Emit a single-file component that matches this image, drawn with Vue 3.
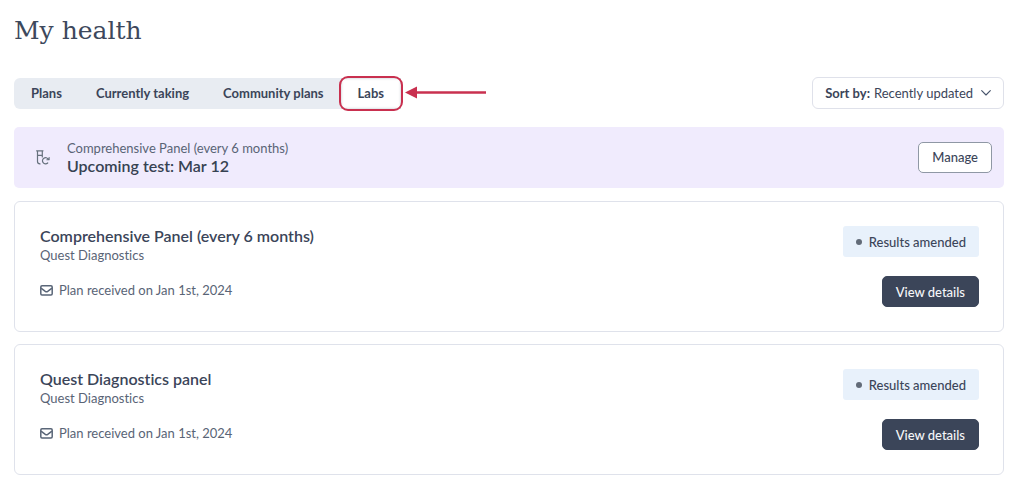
<script setup>
import { ref } from 'vue'

const tabs = ['Plans', 'Currently taking', 'Community plans', 'Labs']
const active = ref('Labs')
const sort = ref('Recently updated')
const panels = [
  { title: 'Comprehensive Panel (every 6 months)', lab: 'Quest Diagnostics', note: 'Plan received on Jan 1st, 2024', status: 'Results amended' },
  { title: 'Quest Diagnostics panel', lab: 'Quest Diagnostics', note: 'Plan received on Jan 1st, 2024', status: 'Results amended' },
]
</script>

<template>
  <main class="page">
    <h1>My health</h1>

    <div class="toolbar">
      <nav class="tabs" aria-label="Health sections">
        <button
          v-for="tab in tabs"
          :key="tab"
          type="button"
          class="tab"
          :class="{ active: tab === active }"
          @click="active = tab"
        >{{ tab }}</button>
      </nav>
      <svg class="arrow" width="82" height="14" viewBox="0 0 82 14" aria-hidden="true">
        <path d="M11 6.5H81" stroke="#c9304f" stroke-width="2.4" fill="none" />
        <path d="M0 6.5L12 0.5V12.5Z" fill="#c9304f" />
      </svg>
      <div class="sort">
        <label for="sort">Sort by:</label>
        <select id="sort" v-model="sort">
          <option>Recently updated</option>
        </select>
        <svg class="chevron" width="10" height="6" viewBox="0 0 10 6" aria-hidden="true">
          <path d="M0.7 0.7L5 5L9.3 0.7" fill="none" stroke="#46536a" stroke-width="1.1" stroke-linecap="round" stroke-linejoin="round" />
        </svg>
      </div>
    </div>

    <section class="banner">
      <svg class="tube" width="14" height="15" viewBox="0 0 14 15" fill="none" stroke="#66717d" stroke-width="1.2" stroke-linecap="round" aria-hidden="true">
        <path d="M0.6 0.8H7M1.5 0.8V11.4Q1.5 13.7 4 13.9M6.3 0.8V7M1.5 5.4H6.3" />
        <path d="M12.3 9.3A3.1 3.1 0 1 0 11.7 13" />
        <path d="M13.4 7.4V10H10.8Z" fill="#66717d" stroke-width="0.5" />
      </svg>
      <div class="banner-text">
        <p class="banner-name">Comprehensive Panel (every 6 months)</p>
        <p class="banner-test">Upcoming test: Mar 12</p>
      </div>
      <button type="button" class="btn outline">Manage</button>
    </section>

    <article v-for="panel in panels" :key="panel.title" class="card">
      <div class="info">
        <h2>{{ panel.title }}</h2>
        <p class="lab">{{ panel.lab }}</p>
        <p class="note">
          <svg width="13" height="11" viewBox="0 0 13 11" fill="none" stroke="#5a6678" stroke-width="1.5" stroke-linejoin="round" aria-hidden="true">
            <rect x="0.8" y="0.8" width="11.4" height="9.2" rx="1.2" />
            <path d="M1 3.2L5.3 6.4Q6.5 7.2 7.7 6.4L12 3.2" />
          </svg>
          <span>{{ panel.note }}</span>
        </p>
      </div>
      <div class="actions">
        <span class="status"><i class="dot"></i>{{ panel.status }}</span>
        <button type="button" class="btn solid">View details</button>
      </div>
    </article>
  </main>
</template>

<style>
body {
  margin: 0;
  background: #fff;
}
</style>

<style scoped>
.page {
  padding: 13px 20px 16px 14px;
  font-family: Lato, "Open Sans", sans-serif;
  font-size: 13px;
  font-variant-ligatures: none;
  line-height: 18px;
  color: #3b4559;
}
h1, h2, p {
  margin: 0;
}
h1 {
  font-family: "DejaVu Serif", serif;
  font-size: 25px;
  font-weight: 400;
  line-height: 36px;
  color: #3d485c;
}
button, select {
  font: inherit;
  font-variant-ligatures: none;
  color: inherit;
  margin: 0;
}
.toolbar {
  display: flex;
  align-items: center;
  margin-top: 28px;
  margin-bottom: 18px;
}
.tabs {
  display: flex;
  background: #e8ecf2;
  border-radius: 6px;
}
.tab {
  position: relative;
  border: 0;
  background: none;
  height: 31px;
  padding: 0 17px;
  font-weight: 700;
  white-space: nowrap;
}
.tab.active {
  background: #fff;
  box-shadow: inset 0 0 3px #b9c0cc;
}
.tab.active::after {
  content: "";
  position: absolute;
  inset: -2px;
  border: 2px solid #c9304f;
  border-radius: 9px;
}
.arrow {
  margin-left: 4px;
}
.sort {
  display: flex;
  align-items: center;
  box-sizing: border-box;
  height: 32px;
  margin-left: auto;
  padding: 0 12px;
  border: 1px solid #dfe1ea;
  border-radius: 6px;
}
.sort label {
  font-weight: 700;
}
.sort select {
  appearance: none;
  border: 0;
  padding: 0 17px 0 4px;
  background: none;
}
.chevron {
  margin-left: -10px;
  pointer-events: none;
}
.banner {
  display: flex;
  align-items: center;
  padding: 12px 12px 13px 22px;
  background: #f0ebfd;
  border-radius: 5px;
}
.banner-text {
  flex: 1;
  margin-left: 17px;
}
.banner-name {
  color: #596476;
}
.banner-test {
  font-size: 16px;
  font-weight: 600;
  color: #364252;
}
.btn {
  box-sizing: border-box;
  height: 31px;
  padding: 0 13px;
  border: 1px solid #3b4559;
  border-radius: 5px;
  font-weight: 500;
}
.outline {
  background: #fff;
  border-color: #8f98a5;
}
.solid {
  background: #3b4559;
  color: #f5f6f8;
}
.card {
  display: flex;
  justify-content: space-between;
  margin-top: 12px;
  padding: 24px 24px 24px 25px;
  border: 1px solid #dfe2eb;
  border-radius: 6px;
}
.banner + .card {
  margin-top: 13px;
}
h2 {
  font-size: 16px;
  font-weight: 600;
  line-height: 20px;
}
.lab, .note {
  color: #596476;
}
.note {
  display: flex;
  align-items: center;
  gap: 6px;
  margin-top: 17px;
}
.actions {
  display: flex;
  flex-direction: column;
  align-items: flex-end;
  gap: 19px;
}
.status {
  display: flex;
  align-items: center;
  gap: 7px;
  height: 31px;
  padding: 0 13px;
  background: #e8f1fb;
  border-radius: 3px;
  font-weight: 500;
}
.dot {
  width: 6px;
  height: 6px;
  border-radius: 50%;
  background: #626b78;
}
</style>
